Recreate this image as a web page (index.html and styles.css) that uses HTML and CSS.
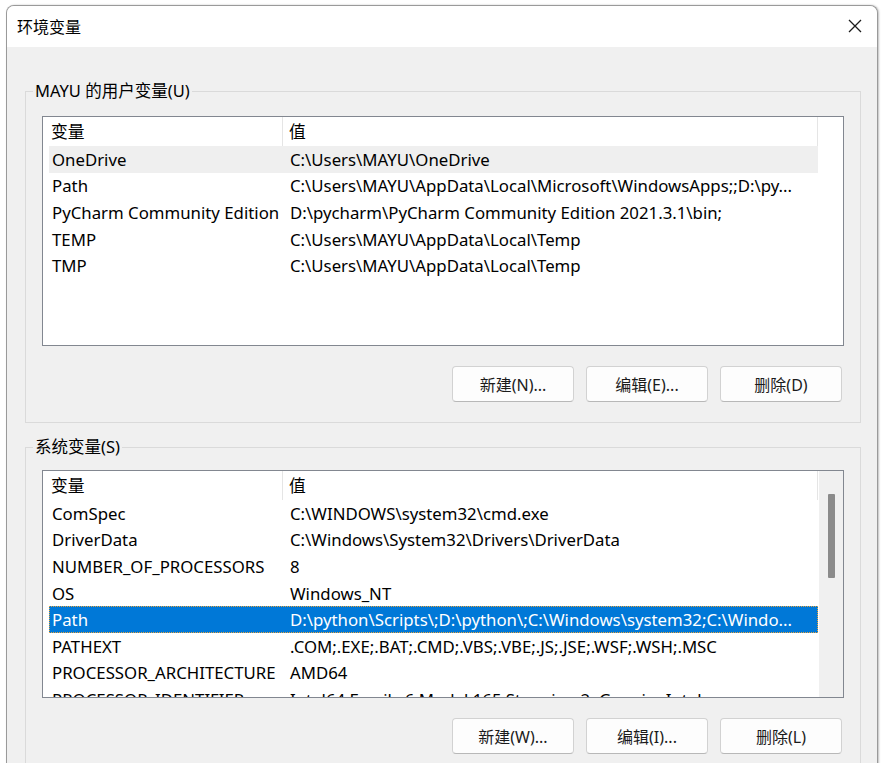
FILE: index.html
```html
<!DOCTYPE html>
<html lang="zh-CN">
<head>
<meta charset="utf-8">
<title>环境变量</title>
<link rel="stylesheet" href="styles.css">
</head>
<body>
<div class="window">
  <div class="titlebar">
    <span class="title">环境变量</span>
    <svg class="close" width="14" height="14" viewBox="0 0 14 14"><path d="M1 1 L13 13 M13 1 L1 13" stroke="#1b1b1b" stroke-width="1.3" fill="none"/></svg>
  </div>
  <div class="content">
    <fieldset class="group">
      <legend>MAYU 的用户变量(U)</legend>
      <div class="list list-user">
        <div class="list-main">
          <div class="hdr"><div class="hc c1">变量</div><div class="hc c2">值</div><div class="hc fill"></div></div>
          <div class="rows">
            <div class="row hover"><div class="cell c1">OneDrive</div><div class="cell c2">C:\Users\MAYU\OneDrive</div></div>
            <div class="row"><div class="cell c1">Path</div><div class="cell c2">C:\Users\MAYU\AppData\Local\Microsoft\WindowsApps;;D:\py...</div></div>
            <div class="row"><div class="cell c1">PyCharm Community Edition</div><div class="cell c2">D:\pycharm\PyCharm Community Edition 2021.3.1\bin;</div></div>
            <div class="row"><div class="cell c1">TEMP</div><div class="cell c2">C:\Users\MAYU\AppData\Local\Temp</div></div>
            <div class="row"><div class="cell c1">TMP</div><div class="cell c2">C:\Users\MAYU\AppData\Local\Temp</div></div>
          </div>
        </div>
      </div>
      <div class="buttons">
        <button class="btn">新建(N)...</button>
        <button class="btn">编辑(E)...</button>
        <button class="btn">删除(D)</button>
      </div>
    </fieldset>
    <fieldset class="group group-sys">
      <legend>系统变量(S)</legend>
      <div class="list list-sys">
        <div class="list-main">
          <div class="hdr"><div class="hc c1">变量</div><div class="hc c2">值</div></div>
          <div class="rows">
            <div class="row"><div class="cell c1">ComSpec</div><div class="cell c2">C:\WINDOWS\system32\cmd.exe</div></div>
            <div class="row"><div class="cell c1">DriverData</div><div class="cell c2">C:\Windows\System32\Drivers\DriverData</div></div>
            <div class="row"><div class="cell c1">NUMBER_OF_PROCESSORS</div><div class="cell c2">8</div></div>
            <div class="row"><div class="cell c1">OS</div><div class="cell c2">Windows_NT</div></div>
            <div class="row selected"><div class="cell c1">Path</div><div class="cell c2">D:\python\Scripts\;D:\python\;C:\Windows\system32;C:\Windo...</div></div>
            <div class="row"><div class="cell c1">PATHEXT</div><div class="cell c2">.COM;.EXE;.BAT;.CMD;.VBS;.VBE;.JS;.JSE;.WSF;.WSH;.MSC</div></div>
            <div class="row"><div class="cell c1">PROCESSOR_ARCHITECTURE</div><div class="cell c2">AMD64</div></div>
            <div class="row"><div class="cell c1">PROCESSOR_IDENTIFIER</div><div class="cell c2">Intel64 Family 6 Model 165 Stepping 2, GenuineIntel</div></div>
          </div>
        </div>
        <div class="vscroll"><div class="thumb"></div></div>
      </div>
      <div class="buttons">
        <button class="btn">新建(W)...</button>
        <button class="btn">编辑(I)...</button>
        <button class="btn">删除(L)</button>
      </div>
    </fieldset>
  </div>
</div>
</body>
</html>
```
FILE: styles.css
```css
html, body {
  margin: 0;
  padding: 0;
  background: #ffffff;
  overflow: hidden;
  height: 763px;
}
body {
  font-family: "Noto Sans", "Noto Sans CJK SC", sans-serif;
  font-size: 16.8px;
  color: #000;
}
.window {
  margin: 5px 0 0 6px;
  width: 872px;
  height: 780px;
  border: 1px solid #9a9a9a;
  border-bottom: none;
  border-radius: 8px 8px 0 0;
  overflow: hidden;
  background: #f0f0f0;
  box-sizing: border-box;
  box-shadow: 1px 0 2px rgba(0,0,0,0.25);
}
.titlebar {
  height: 41px;
  background: #ffffff;
  display: flex;
  align-items: center;
  justify-content: space-between;
  padding: 0 15px 2px 10px;
  box-sizing: border-box;
}
.title {
  font-family: "Noto Sans CJK SC", sans-serif;
  font-size: 16px;
  line-height: 20px;
  color: #000;
}
.close {
  display: block;
}
.content {
  padding: 34px 16px 0 18px;
}
.group {
  margin: 0;
  border: 1px solid #dadada;
  padding: 15px 16px 20px 16px;
  min-width: 0;
}
.group legend {
  margin-left: -9px;
  padding: 0 2px;
  font-size: 16.5px;
  line-height: 20px;
  color: #000;
}
.group-sys {
  margin-top: 14px;
  padding-top: 13px;
}
.list {
  border: 1px solid #828790;
  background: #ffffff;
  display: flex;
  overflow: hidden;
  box-sizing: border-box;
}
.list-user { height: 230px; }
.list-sys { height: 228px; }
.list-main {
  flex: 1;
  min-width: 0;
}
.hdr {
  display: flex;
  height: 29px;
  align-items: stretch;
}
.hc {
  display: flex;
  align-items: center;
  box-sizing: border-box;
  line-height: 24px;
  padding-top: 1px;
}
.hdr .c1 {
  width: 240px;
  padding-left: 8px;
  border-right: 1px solid #e5e5e5;
}
.hdr .c2 {
  width: 535px;
  padding-left: 6px;
  border-right: 1px solid #e5e5e5;
}
.hdr .fill { flex: 1; }
.rows {
  padding-left: 6px;
}
.row {
  display: flex;
  width: 769px;
  height: 26.6px;
  align-items: center;
  white-space: nowrap;
  box-sizing: border-box;
  padding-top: 1px;
}
.row.hover {
  background: #efefef;
}
.row.selected {
  background: #0078d7;
  color: #ffffff;
  outline: 1px dotted #e8a33c;
  outline-offset: -1px;
}
.cell {
  overflow: hidden;
  text-overflow: ellipsis;
  box-sizing: border-box;
  line-height: 24px;
}
.row .c1 {
  width: 234px;
  padding-left: 3px;
}
.row .c2 {
  width: 535px;
  padding-left: 7px;
}
.vscroll {
  width: 24px;
  background: #f0f0f0;
  padding-top: 23px;
  box-sizing: border-box;
  display: flex;
  justify-content: center;
  flex-shrink: 0;
}
.thumb {
  width: 7px;
  height: 84px;
  background: #8b8b8b;
  border-radius: 1px;
}
.buttons {
  display: flex;
  justify-content: flex-end;
  gap: 12px;
  margin-top: 20px;
  padding-right: 2px;
}
.btn {
  width: 122px;
  height: 36px;
  background: #fdfdfd;
  border: 1px solid #d2d2d2;
  border-bottom-color: #b8b8b8;
  border-radius: 4px;
  font-family: "Noto Sans", "Noto Sans CJK SC", sans-serif;
  font-size: 16px;
  color: #1b1b1b;
  padding: 0;
}
```
